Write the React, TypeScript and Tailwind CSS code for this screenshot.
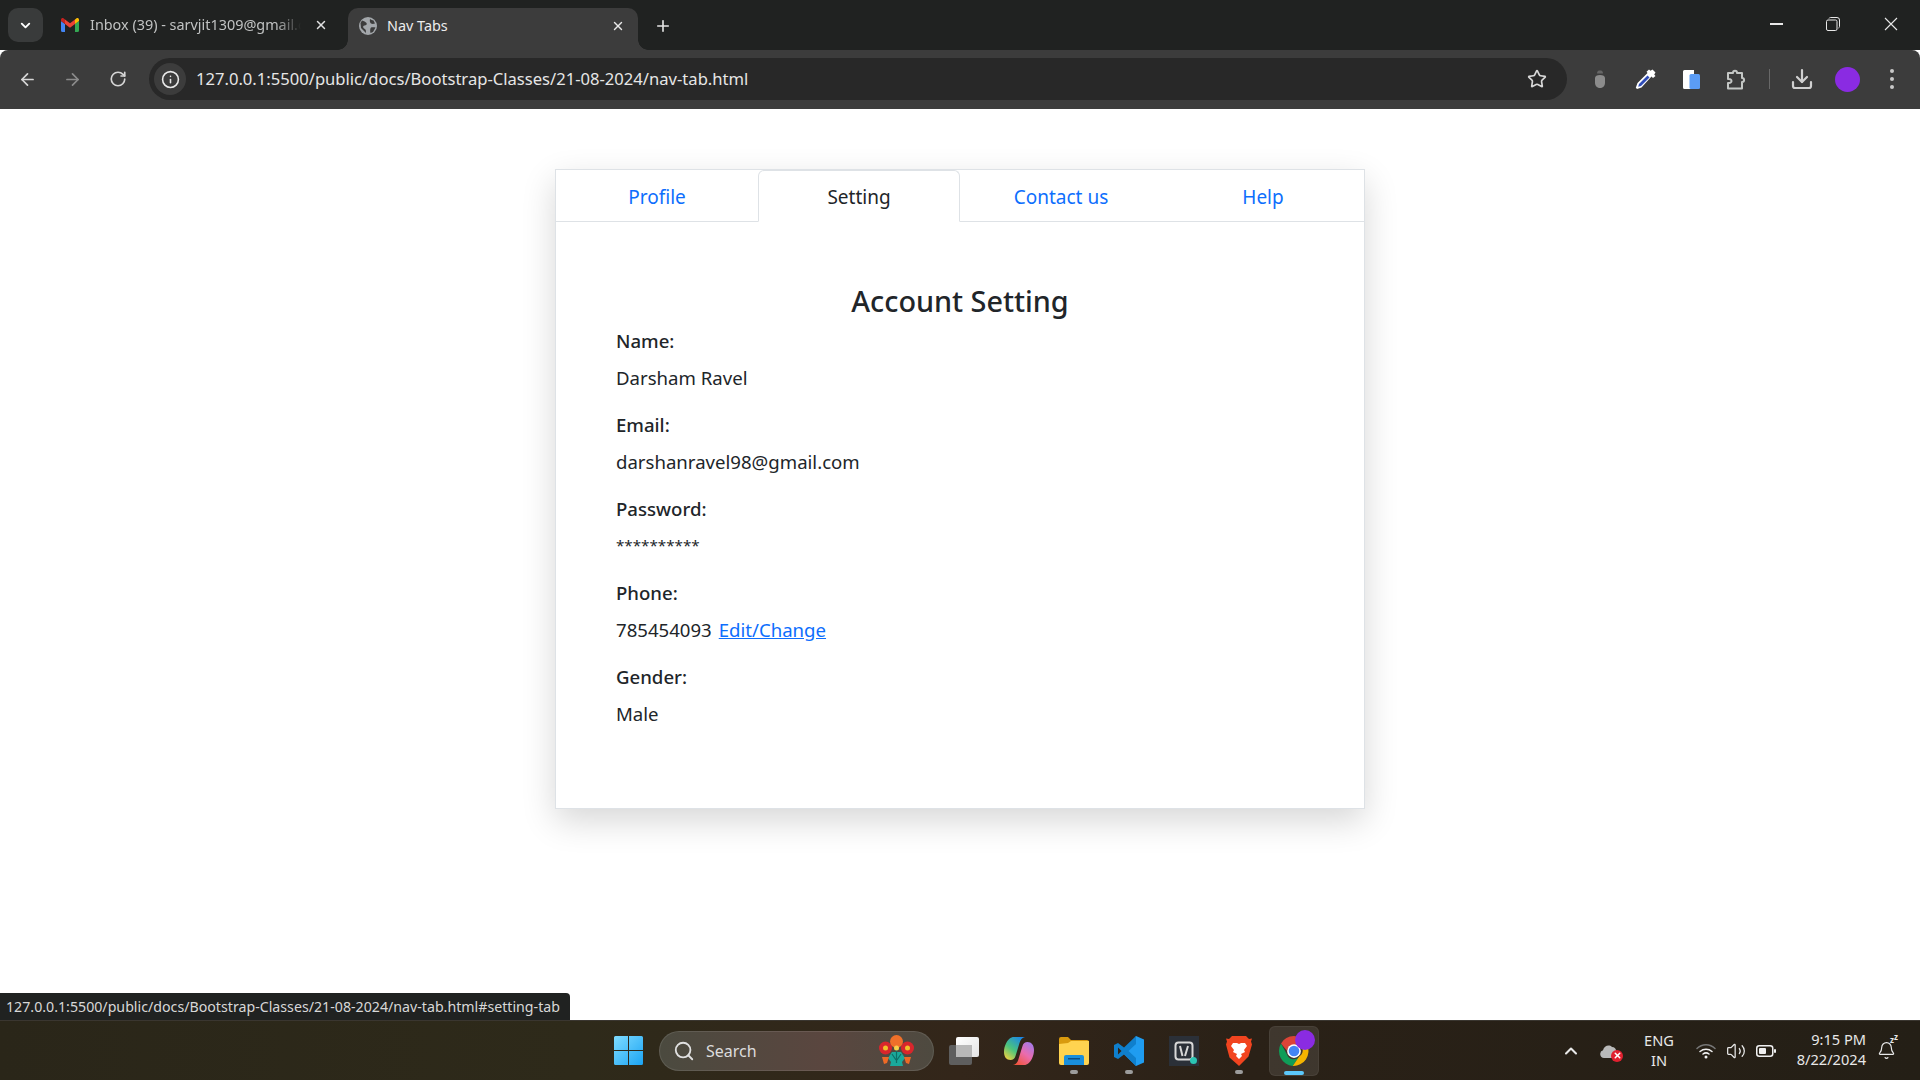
import { ArrowLeft, ArrowRight, Bell, ChevronDown, ChevronUp, Download, Info, Plus, RotateCw, Search, Star, Volume2, X } from "lucide-react"

const UI_FONT = "font-['Noto_Sans',sans-serif]"

const fields = [
  { label: "Name:", value: "Darsham Ravel" },
  { label: "Email:", value: "darshanravel98@gmail.com" },
  { label: "Password:", value: "**********", small: true },
  { label: "Phone:", value: "785454093", link: "Edit/Change" },
  { label: "Gender:", value: "Male" },
]

function GmailIcon() {
  return (
    <svg width="18" height="14" viewBox="0 0 18 14" className="shrink-0">
      <path d="M0 3v9.500A1.500 1.500 0 0 0 1.500 14H4V6z" fill="#4285f4" />
      <path d="M14 6v8h2.500a1.500 1.500 0 0 0 1.500-1.500V3z" fill="#34a853" />
      <path d="M14 1.500V6l4-3V1.800C18 .4 16.400-.4 15.300.5z" fill="#fbbc04" />
      <path d="M4 6V1.500L9 5.300l5-3.800V6L9 9.800z" fill="#ea4335" />
      <path d="M0 1.800V3l4 3V1.500L2.700.5C1.600-.4 0 .4 0 1.800z" fill="#c5221f" />
    </svg>
  )
}

function GlobeIcon() {
  return (
    <svg width="18" height="18" viewBox="0 0 18 18" className="shrink-0">
      <circle cx="9" cy="9" r="9" fill="#a3a7ab" />
      <path d="M3 3.500c2 .5 3.500 1.200 4.500 2.500 1 1.500-.5 2.500-2 2.500-1.200 0-1.800 1.200-1 2.500.7 1 2 1 2.300 2.200L7 16 2 11 1.500 6zM11 2c1 1 2.500 1 3.500 1.500l1.500 3c-1.500.5-3 .5-4 0-1-.6-1.500-2.500-1-4.500zM12 10.500c1-.5 3-.5 4.500 0L14 15l-2.500 1c-.5-2-.5-4.500.5-5.500z" fill="#3c3c3c" />
    </svg>
  )
}

function RestoreIcon() {
  return (
    <svg width="14" height="14" viewBox="0 0 14 14" fill="none" stroke="#e8e8e8" strokeWidth="1">
      <rect x="0.500" y="3" width="10.500" height="10.500" rx="1.500" />
      <path d="M3 1.500c.3-.7.800-1 1.500-1h6.500a2.500 2.500 0 0 1 2.500 2.500v6.500c0 .7-.4 1.200-1 1.500" />
    </svg>
  )
}

function CloseGlyph() {
  return (
    <svg width="14" height="14" viewBox="0 0 14 14" stroke="#e8e8e8" strokeWidth="1.100">
      <path d="M1 1l12 12M13 1L1 13" />
    </svg>
  )
}

function BugIcon() {
  return (
    <svg width="14" height="20" viewBox="0 0 14 20">
      <path d="M4 4.500C4 2 5.500 1.500 7 1.500s3 .5 3 3z" fill="#666" />
      <path d="M2 9c0-2 2-3 5-3s5 1 5 3v5c0 3-2.500 5-5 5s-5-2-5-5z" fill="#8c8c8c" />
    </svg>
  )
}

function EyedropperIcon() {
  return (
    <svg width="22" height="22" viewBox="0 0 22 22">
      <path d="M14 1.500l1.500 1.200 2-1.200 3 3-1.300 2 1.300 1.500-2.500 2-1.500-1.400L6.500 19.500 2 21l-1.200-1.200L2.500 15 12.500 5 11.500 3.800z" fill="#fff" />
      <path d="M12.500 7.500l2 2L6 18l-2.800.8.800-2.800z" fill="#2f4cb8" />
    </svg>
  )
}

function PagesIcon() {
  return (
    <svg width="17" height="19" viewBox="0 0 17 19">
      <path d="M1.500 0H11v19H1.500A1.500 1.500 0 0 1 0 17.500v-16A1.500 1.500 0 0 1 1.500 0z" fill="#fff" />
      <rect x="6.500" y="4" width="10.500" height="15" rx="1.500" fill="#5b9cf5" />
    </svg>
  )
}

function PuzzleIcon() {
  return (
    <svg width="21" height="21" viewBox="0 0 21 21" fill="none" stroke="#c4c7c5" strokeWidth="2" strokeLinejoin="round">
      <path d="M2 4h5c0-3 4-3 4 0h5v5c2.800 0 2.800 4 0 4v6.500H2V14c2.500.5 3.500-1 3.500-2S4.500 9.500 2 10z" />
    </svg>
  )
}

function ChromeLogo() {
  return (
    <svg width="30" height="30" viewBox="0 0 48 48">
      <path d="M24 14h21a24 24 0 0 0-21-14A24 24 0 0 0 3.200 12L13 24A11 11 0 0 1 24 14z" fill="#db4437" />
      <path d="M3.200 12A24 24 0 0 0 22 47.900l10-14.900a11 11 0 0 1-19-3z" fill="#0f9d58" />
      <path d="M45 14a24 24 0 0 1-23 33.900L32 33a11 11 0 0 0 1-19z" fill="#f4b400" />
      <circle cx="24" cy="24" r="11" fill="#fff" />
      <circle cx="24" cy="24" r="8.500" fill="#4285f4" />
    </svg>
  )
}

function WindowsLogo() {
  return (
    <svg width="29" height="29" viewBox="0 0 29 29">
      <defs>
        <linearGradient id="winA" x1="0" y1="0" x2="1" y2="1">
          <stop offset="0" stopColor="#7fdcff" />
          <stop offset="1" stopColor="#1ba4f4" />
        </linearGradient>
      </defs>
      <path d="M0 1.500A1.500 1.500 0 0 1 1.500 0H14v14H0zM15 0h12.500A1.500 1.500 0 0 1 29 1.500V14H15zM0 15h14v14H1.500A1.500 1.500 0 0 1 0 27.500zM15 15h14v12.500a1.500 1.500 0 0 1-1.500 1.500H15z" fill="url(#winA)" />
    </svg>
  )
}

function FlowerIcon() {
  return (
    <svg width="35" height="32" viewBox="0 0 35 32">
      <path d="M13 17h9l4 6-3 4 1 4H11l1-4-3-4z" fill="#1aa99b" />
      <path d="M17.500 14v14M13 19l4 6M22 19l-4 6" stroke="#0e6f66" strokeWidth="1.200" />
      <circle cx="6.500" cy="13" r="6.500" fill="#d8262c" />
      <circle cx="28.500" cy="13" r="6.500" fill="#d8262c" />
      <circle cx="6.500" cy="13" r="2.500" fill="#f2c029" />
      <circle cx="28.500" cy="13" r="2.500" fill="#f2c029" />
      <circle cx="17.500" cy="6.500" r="6.500" fill="#f0702a" />
      <circle cx="17.500" cy="13" r="2.500" fill="#f7d24a" />
      <path d="M3 22h7l-2 6-3 1zM32 22h-7l2 6 3 1z" fill="#ee6a26" />
    </svg>
  )
}

function TaskViewIcon() {
  return (
    <div className="relative h-[28px] w-[30px]">
      <div className="absolute left-0 top-[8px] h-[20px] w-[23px] rounded-[2px] bg-[#5e5e5e]" />
      <div className="absolute right-0 top-0 h-[20px] w-[23px] rounded-[2px] bg-[linear-gradient(135deg,#ffffff,#e4e4e4)]" />
      <div className="absolute left-[7px] top-[8px] h-[12px] w-[16px] bg-[#b8b8b8]" />
    </div>
  )
}

function CopilotIcon() {
  return (
    <svg width="30" height="28" viewBox="0 0 30 28">
      <defs>
        <linearGradient id="copA" x1="0.100" y1="1" x2="0.800" y2="0">
          <stop offset="0" stopColor="#f9d13e" />
          <stop offset="0.450" stopColor="#4cc47c" />
          <stop offset="1" stopColor="#1a86e8" />
        </linearGradient>
        <linearGradient id="copB" x1="0.200" y1="1" x2="0.900" y2="0">
          <stop offset="0" stopColor="#f2553a" />
          <stop offset="0.500" stopColor="#ea6cae" />
          <stop offset="1" stopColor="#9d7bee" />
        </linearGradient>
      </defs>
      <path d="M10 0h11c-3 .5-4.500 2.500-5.500 6l-4 13c-.7 2.500-2.500 4-5 4C2.500 23 0 20 0 15c0-3 .7-6 2-8.500C4 2.500 6.500 0 10 0z" fill="url(#copA)" />
      <path d="M20 28H9c3-.5 4.500-2.500 5.500-6l4-13c.7-2.500 2.500-4 5-4C27.500 5 30 8 30 13c0 3-.7 6-2 8.500C26 25.500 23.500 28 20 28z" fill="url(#copB)" />
    </svg>
  )
}

function FolderIcon() {
  return (
    <svg width="30" height="28" viewBox="0 0 30 28">
      <path d="M0 2a2 2 0 0 1 2-2h7l3 3h16a2 2 0 0 1 2 2v3H0z" fill="#d99a0e" />
      <path d="M0 7l9-1 3-2h18v22a2 2 0 0 1-2 2H2a2 2 0 0 1-2-2z" fill="#ffd350" />
      <path d="M5 28v-8a2 2 0 0 1 2-2h16a2 2 0 0 1 2 2v8z" fill="#1a8fdc" />
      <rect x="9" y="21" width="12" height="1.500" fill="#0b4f86" />
    </svg>
  )
}

function VsCodeIcon() {
  return (
    <svg width="30" height="30" viewBox="0 0 30 30">
      <path d="M22 0l8 3.500v23L22 30 9 17l6-4.500z" fill="#1f9cf0" />
      <path d="M22 0v30L10 18.500 4 23 0 21V9l4-2 6 4.500zM22 8l-7.500 7 7.500 7zM4 11.500v7L7.500 15z" fill="#0f7fcc" />
    </svg>
  )
}

function SaavnIcon() {
  return (
    <div className="relative flex h-[30px] w-[30px] items-center justify-center bg-[#2b3038]">
      <svg width="20" height="20" viewBox="0 0 20 20" fill="none" stroke="#d8d8d8" strokeWidth="2">
        <rect x="1.500" y="1.500" width="17" height="17" rx="3" />
        <path d="M6 5l2.500 10M14 5l-3 10" />
      </svg>
      <span className="absolute bottom-[2px] right-[2px] h-[7px] w-[7px] rounded-full bg-[#2bc5b4]" />
    </div>
  )
}

function BraveIcon() {
  return (
    <svg width="26" height="30" viewBox="0 0 26 30">
      <path d="M6 0h14l3 3 3-.5-1 3 1 3-3.500 12L14 29l-1 1-1-1-8.500-7.500L0 8.500l1-3-1-3 3 .5z" fill="#f1441f" />
      <path d="M7 7h4l2 1 2-1h4l2 3-3 4 1 2-4 2 1 2-3 3-3-3 1-2-4-2 1-2-3-4z" fill="#fff" />
    </svg>
  )
}

function TaskCell({ children, dot, active }: { children: React.ReactNode; dot?: boolean; active?: boolean }) {
  return (
    <div className="relative flex h-[50px] w-[55px] items-center justify-center">
      {active && <div className="absolute inset-y-0 left-[2.500px] right-[2.500px] rounded-md border border-white/5 bg-white/10" />}
      <div className="relative flex h-[30px] items-center justify-center">{children}</div>
      {dot && <span className="absolute bottom-[2px] h-[4px] w-[8px] rounded-full bg-[#9c9c9c]" />}
      {active && <span className="absolute bottom-[1px] h-[4px] w-[20px] rounded-full bg-[#5cc8fb]" />}
    </div>
  )
}

export default function App() {
  return (
    <div className={`flex h-screen w-full flex-col overflow-hidden bg-white ${UI_FONT}`}>
      {/* Tab strip */}
      <div className="flex h-[50px] shrink-0 items-end bg-[#202221] text-[14.400px]">
        <div className="mb-[8px] ml-[8px] flex h-[34px] w-[35px] items-center justify-center rounded-[10px] bg-[#393b3b]">
          <ChevronDown className="h-[15px] w-[15px] text-white" strokeWidth={3} />
        </div>
        <div className="mb-[8px] ml-[18px] flex h-[34px] w-[287px] items-center text-[#c0c2c2]">
          <GmailIcon />
          <span className="ml-[11px] w-[211px] overflow-hidden whitespace-nowrap [mask-image:linear-gradient(90deg,#000_88%,transparent)]">Inbox (39) - sarvjit1309@gmail.c</span>
          <X className="ml-[13px] h-[14px] w-[14px] text-[#e0e0e0]" strokeWidth={2.500} />
        </div>
        <div className="relative flex h-[42px] w-[290px] items-center rounded-t-[10px] bg-[#3c3c3c] pb-[6px] pl-[11px] text-[#ececec]">
          <span className="absolute bottom-0 left-[-10px] h-[10px] w-[10px] bg-[radial-gradient(circle_at_0_0,#202221_9.500px,#3c3c3c_10px)]" />
          <span className="absolute bottom-0 right-[-10px] h-[10px] w-[10px] bg-[radial-gradient(circle_at_100%_0,#202221_9.500px,#3c3c3c_10px)]" />
          <GlobeIcon />
          <span className="ml-[10px] flex-1">Nav Tabs</span>
          <X className="mr-[13px] h-[14px] w-[14px] text-[#e8e8e8]" strokeWidth={2.500} />
        </div>
        <Plus className="mb-[15px] ml-[16px] h-[18px] w-[18px] text-[#e4e4e4]" strokeWidth={2.200} />
        <div className="mb-[19px] ml-auto flex items-center">
          <div className="h-[1.500px] w-[13px] bg-[#e8e8e8]" />
          <div className="ml-[43px]"><RestoreIcon /></div>
          <div className="ml-[44px] mr-[22px]"><CloseGlyph /></div>
        </div>
      </div>

      {/* Toolbar */}
      <div className="flex h-[59px] shrink-0 items-start rounded-t-[8px] bg-[#3c3c3c] pt-[8px]">
        <div className="flex h-[42px] items-center pl-[18px]">
          <ArrowLeft className="h-[19px] w-[19px] text-[#d6d6d6]" strokeWidth={2.200} />
          <ArrowRight className="ml-[26px] h-[19px] w-[19px] text-[#8b8b8b]" strokeWidth={2.200} />
          <RotateCw className="ml-[27px] h-[18px] w-[18px] text-[#d6d6d6]" strokeWidth={2.200} />
        </div>
        <div className="ml-[22px] flex h-[42px] flex-1 items-center rounded-full bg-[#282828] pl-[5px] pr-[20px]">
          <div className="flex h-[32px] w-[32px] items-center justify-center rounded-full bg-[#3c3c3c]">
            <Info className="h-[19px] w-[19px] text-[#e8e8e8]" strokeWidth={2} />
          </div>
          <span className="ml-[10px] flex-1 whitespace-nowrap pt-[1px] text-[16.600px] text-[#e6e6e6]">127.0.0.1:5500/public/docs/Bootstrap-Classes/21-08-2024/nav-tab.html</span>
          <Star className="h-[20px] w-[20px] text-[#d8d8d8]" strokeWidth={2} />
        </div>
        <div className="flex h-[42px] items-center">
          <div className="ml-[26px] flex w-[14px] justify-center"><BugIcon /></div>
          <div className="ml-[28px]"><EyedropperIcon /></div>
          <div className="ml-[26px]"><PagesIcon /></div>
          <div className="ml-[26px]"><PuzzleIcon /></div>
          <div className="ml-[22px] h-[20px] w-px bg-[#686868]" />
          <Download className="ml-[20px] h-[24px] w-[24px] text-[#d0d0d0]" strokeWidth={2.200} />
          <div className="ml-[21px] h-[25px] w-[25px] rounded-full bg-[#8a2be2]" />
          <div className="ml-[30px] mr-[26px] flex flex-col gap-[4px]">
            <span className="h-[4px] w-[4px] rounded-full bg-[#c8c8c8]" />
            <span className="h-[4px] w-[4px] rounded-full bg-[#c8c8c8]" />
            <span className="h-[4px] w-[4px] rounded-full bg-[#c8c8c8]" />
          </div>
        </div>
      </div>

      {/* Page */}
      <div className="relative flex-1 overflow-hidden bg-white pt-[60px] text-[#212529]">
        <div className="mx-auto h-[640px] w-[810px] border border-[#dee2e6] bg-white shadow-[0_12px_32px_rgba(0,0,0,0.16)]">
          <div className="flex h-[52px] border-b border-[#dee2e6] pt-[4px] text-[19px] text-[#0d6efd]">
            <div className="flex w-[202px] items-center justify-center">Profile</div>
            <div className="-mt-[4px] -mb-px flex w-[202px] items-center justify-center rounded-t-[6px] border border-[#dee2e6] border-b-white bg-white pt-[2px] text-[#212529]">Setting</div>
            <div className="flex w-[202px] items-center justify-center">Contact us</div>
            <div className="flex w-[202px] items-center justify-center">Help</div>
          </div>
          <div className="px-[60px] pt-[62px]">
            <h3 className="mb-[8px] h-[34px] text-center text-[28.800px] font-medium leading-[34px]">Account Setting</h3>
            {fields.map((field) => (
              <div key={field.label} className="mb-[18px] text-[18.600px] leading-[29px]">
                <div className="mb-[8px] font-medium">{field.label}</div>
                <div className={field.small ? "text-[15.200px]" : undefined}>
                  {field.value}
                  {field.link && <a className="ml-[7px] text-[#0d6efd] underline">{field.link}</a>}
                </div>
              </div>
            ))}
          </div>
        </div>

        {/* Link status bubble */}
        <div className="absolute bottom-0 left-0 flex h-[27px] w-[570px] items-center rounded-tr-[4px] bg-[#202221] pl-[6px] text-[14.200px] whitespace-nowrap text-[#d8d8d8]">
          127.0.0.1:5500/public/docs/Bootstrap-Classes/21-08-2024/nav-tab.html#setting-tab
        </div>
      </div>

      {/* Taskbar */}
      <div className="flex h-[60px] shrink-0 items-center border-t border-[#3a3630] bg-[linear-gradient(90deg,#2a2619,#2e2a1a_30%,#33261a_50%,#2a2117_65%,#241f16)] pl-[603px]">
        <div className="flex w-[50px] justify-center"><WindowsLogo /></div>
        <div className="ml-[6px] flex h-[40px] w-[275px] items-center rounded-full border border-white/10 bg-[linear-gradient(90deg,#4b4a3f,#5a463f_60%,#4e4a40)] pl-[13px] pr-[19px]">
          <Search className="h-[22px] w-[22px] text-[#e0e0e0]" strokeWidth={2} />
          <span className="ml-[11px] flex-1 text-[16px] text-[#dcdcdc]">Search</span>
          <FlowerIcon />
        </div>
        <div className="ml-[2px] flex items-center">
          <TaskCell><TaskViewIcon /></TaskCell>
          <TaskCell><CopilotIcon /></TaskCell>
          <TaskCell dot><FolderIcon /></TaskCell>
          <TaskCell dot><VsCodeIcon /></TaskCell>
          <TaskCell><SaavnIcon /></TaskCell>
          <TaskCell dot><BraveIcon /></TaskCell>
          <TaskCell active>
            <ChromeLogo />
            <span className="absolute right-[-6px] top-[-6px] h-[20px] w-[20px] rounded-full bg-[#8a2be2]" />
          </TaskCell>
        </div>
        <div className="ml-auto flex items-center text-[#e8e8e8]">
          <div className="flex w-[30px] justify-center"><ChevronUp className="h-[20px] w-[20px]" strokeWidth={2.500} /></div>
          <div className="relative flex w-[50px] justify-center pr-[4px]">
            <svg width="18" height="14" viewBox="0 0 18 14"><path d="M4 14a4 4 0 0 1-1-7.800C4 2 9 0 12 3c3 0 5 3 4 6l-4 5z" fill="#b9b9b9" /></svg>
            <span className="absolute left-[25px] top-[6px] flex h-[12px] w-[12px] items-center justify-center rounded-full bg-[#e0202f]">
              <X className="h-[9px] w-[9px] text-white" strokeWidth={4} />
            </span>
          </div>
          <div className="-mt-[2px] w-[46px] text-center text-[14.600px] leading-[20px]">ENG<br />IN</div>
          <div className="ml-[9px] flex w-[30px] justify-center">
            <svg width="20" height="16" viewBox="0 0 20 16" fill="none" strokeWidth="1.500" strokeLinecap="round">
              <path d="M1 5.500c5-5 13-5 18 0" stroke="#777" />
              <path d="M4 8.500c3.500-3 8.500-3 12 0M7 11c2-1.500 4-1.500 6 0" stroke="#f0f0f0" />
              <circle cx="10" cy="14" r="1.500" fill="#f0f0f0" stroke="none" />
            </svg>
          </div>
          <div className="flex w-[30px] justify-center"><Volume2 className="h-[20px] w-[20px]" strokeWidth={1.500} /></div>
          <div className="flex w-[30px] justify-center">
            <svg width="20" height="12" viewBox="0 0 20 12">
              <rect x="0.750" y="0.750" width="16" height="10.500" rx="2.500" fill="none" stroke="#f0f0f0" strokeWidth="1.500" />
              <rect x="3" y="3" width="7" height="6" rx="1" fill="#f0f0f0" />
              <rect x="18" y="4" width="2" height="4" rx="1" fill="#f0f0f0" />
            </svg>
          </div>
          <div className="-mt-[3px] w-[85px] text-right text-[14.600px] leading-[20px]">9:15 PM<br />8/22/2024</div>
          <div className="relative mr-[14px] flex w-[40px] justify-center">
            <Bell className="h-[19px] w-[19px]" strokeWidth={1.500} />
            <span className="absolute left-[24px] top-[-6px] text-[8px] font-bold leading-[9px]">z</span>
            <span className="absolute left-[28px] top-[-9px] text-[8px] font-bold leading-[9px]">z</span>
          </div>
        </div>
      </div>
    </div>
  )
}
